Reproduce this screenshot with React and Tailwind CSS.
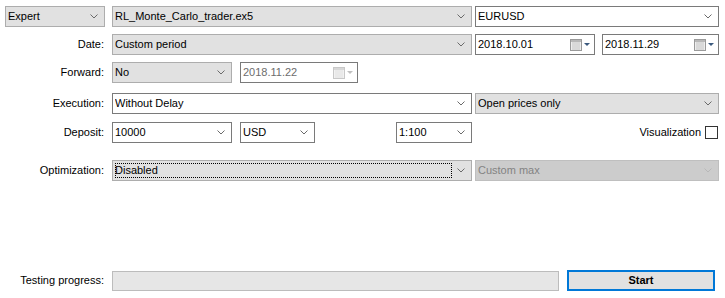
import React from "react";

const Chevron = ({ disabled }) => (
  <svg width="8" height="5" viewBox="0 0 8 5" className="shrink-0">
    <path d="M0.5 0.5 L4 4 L7.5 0.5" fill="none" stroke={disabled ? "#b8b8b8" : "#6a6a6a"} strokeWidth="1" />
  </svg>
);

const CalIcon = ({ disabled }) => (
  <svg width="22" height="12" viewBox="0 0 22 12" className="shrink-0">
    <rect x="0.5" y="0.5" width="11" height="11" fill={disabled ? "#f2f2f2" : "#eeeeee"} stroke={disabled ? "#c8c8c8" : "#9a9a9a"} />
    <rect x="1" y="1" width="10" height="2" fill={disabled ? "#d8d8d8" : "#b8b8b8"} />
    {[3, 5, 7, 9].map((x) =>
      [4, 6, 8, 10].map((y) => (
        <rect key={`${x}-${y}`} x={x - 0.5} y={y - 0.5} width="1" height="1" fill={disabled ? "#d0d0d0" : "#9c9c9c"} />
      ))
    )}
    <path d="M14 4 L20 4 L17 7 Z" fill={disabled ? "#c0c0c0" : "#3c5a7e"} />
  </svg>
);

const Combo = ({ value, w, kind = "ro", focus, dim }) => {
  const base =
    kind === "ro"
      ? "bg-[#e1e1e1] border-[#adadad] text-black"
      : kind === "disabled"
      ? "bg-[#cccccc] border-[#bfbfbf] text-[#838383]"
      : "bg-white border-[#7a7a7a] text-black";
  return (
    <div className={`relative flex items-center h-[21px] border ${base} pl-[2px] pr-[6px] shrink-0 ${w}`}>
      <span className={`flex-1 truncate ${dim ? "text-[#6d6d6d]" : ""}`}>{value}</span>
      <Chevron disabled={kind === "disabled"} />
      {focus && (
        <div className="absolute left-[2px] top-[2px] bottom-[2px] right-[19px] border border-dotted border-black" />
      )}
    </div>
  );
};

const DateBox = ({ value, w, disabled }) => (
  <div className={`flex items-center h-[21px] border border-[#7a7a7a] bg-white pl-[2px] pr-[2px] shrink-0 ${w}`}>
    <span className={`flex-1 ${disabled ? "text-[#6d6d6d]" : "text-black"}`}>{value}</span>
    <CalIcon disabled={disabled} />
  </div>
);

const Label = ({ children }) => (
  <div className="w-[105px] shrink-0 text-right pr-[1px]">{children}</div>
);

export default function App() {
  return (
    <div
      className="w-[725px] h-[298px] bg-white text-[11px] text-black leading-none overflow-hidden"
      style={{ fontFamily: '"Liberation Sans", Arial, sans-serif' }}
    >
      <div className="pt-[6px] flex flex-col">
        <div className="flex items-center pl-[5px]">
          <Combo value="Expert" w="w-[100px]" />
          <div className="ml-[7px]" />
          <Combo value="RL_Monte_Carlo_trader.ex5" w="w-[360px]" />
          <div className="ml-[3px]" />
          <Combo value="EURUSD" w="w-[244px]" kind="edit" />
        </div>

        <div className="flex items-center mt-[7px]">
          <Label>Date:</Label>
          <div className="ml-[7px]" />
          <Combo value="Custom period" w="w-[360px]" />
          <div className="ml-[3px]" />
          <DateBox value="2018.10.01" w="w-[120px]" />
          <div className="ml-[7px]" />
          <DateBox value="2018.11.29" w="w-[117px]" />
        </div>

        <div className="flex items-center mt-[7px]">
          <Label>Forward:</Label>
          <div className="ml-[7px]" />
          <Combo value="No" w="w-[120px]" />
          <div className="ml-[8px]" />
          <DateBox value="2018.11.22" w="w-[118px]" disabled />
        </div>

        <div className="flex items-center mt-[10px]">
          <Label>Execution:</Label>
          <div className="ml-[7px]" />
          <Combo value="Without Delay" w="w-[360px]" kind="edit" />
          <div className="ml-[3px]" />
          <Combo value="Open prices only" w="w-[244px]" />
        </div>

        <div className="flex items-center mt-[8px]">
          <Label>Deposit:</Label>
          <div className="ml-[7px]" />
          <Combo value="10000" w="w-[120px]" kind="edit" />
          <div className="ml-[8px]" />
          <Combo value="USD" w="w-[75px]" kind="edit" />
          <div className="ml-[81px]" />
          <Combo value="1:100" w="w-[76px]" kind="edit" />
          <div className="flex-1 flex items-center justify-end pr-[7px] gap-[4px]">
            <span>Visualization</span>
            <div className="w-[13px] h-[13px] border border-[#333333] bg-white" />
          </div>
        </div>

        <div className="flex items-center mt-[17px]">
          <Label>Optimization:</Label>
          <div className="ml-[7px]" />
          <Combo value="Disabled" w="w-[360px]" focus />
          <div className="ml-[3px]" />
          <Combo value="Custom max" w="w-[244px]" kind="disabled" />
        </div>

        <div className="flex items-center mt-[89px]">
          <Label>Testing progress:</Label>
          <div className="ml-[7px]" />
          <div className="w-[447px] h-[20px] border border-[#bcbcbc] bg-[#e6e6e6]" />
          <div className="ml-[8px]" />
          <div className="w-[148px] h-[21px] border-2 border-[#0078d7] bg-[#e1e1e1] flex items-center justify-center font-bold text-[11px]">
            Start
          </div>
        </div>
      </div>
    </div>
  );
}
